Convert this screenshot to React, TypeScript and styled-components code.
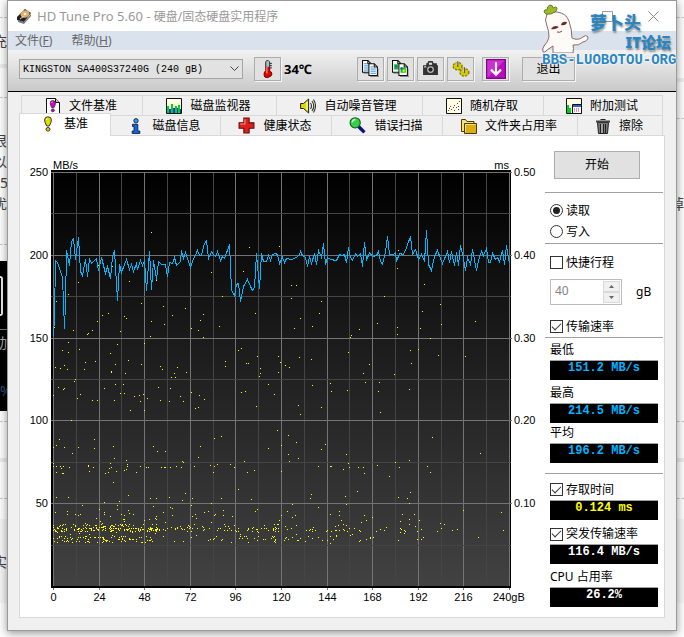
import React from "react";
import styled, { createGlobalStyle, css } from "styled-components";

const UI = '"Noto Sans", "Noto Sans CJK SC", sans-serif';
const MONO = '"Liberation Mono", "Noto Sans CJK SC", monospace';
const PLOT = '"Liberation Sans", Arial, sans-serif';

const GlobalStyle = createGlobalStyle`
  *, *::before, *::after { box-sizing: border-box; }
  body { margin: 0; background: #fcfcfc; font: 12px/16px ${UI}; color: #000; overflow: hidden; }
  button, input, select { font: inherit; color: inherit; margin: 0; padding: 0; border-radius: 0; }
`;

/* ---------- page behind the window ---------- */

const Desktop = styled.div`
  display: grid;
  grid-template-columns: 7px minmax(0, 1fr) 7px;
  padding-bottom: 7px;
`;

const Strip = styled.div`
  display: flex;
  flex-direction: column;
  min-width: 0;
  overflow: hidden;
`;

const StripGap = styled.div<{ $h: number; $bg?: string }>`
  flex: none;
  height: ${(p) => p.$h}px;
  background: ${(p) => p.$bg ?? "transparent"};
`;

const StripDash = styled.div`
  flex: none;
  border-top: 1px dashed #c4c4c4;
`;

const StripText = styled.div<{ $color?: string; $bg?: string; $start?: boolean }>`
  flex: none;
  display: flex;
  justify-content: ${(p) => (p.$start ? "flex-start" : "flex-end")};
  height: 21px;
  font-size: 14px;
  line-height: 21px;
  white-space: nowrap;
  color: ${(p) => p.$color ?? "#444"};
  background: ${(p) => p.$bg ?? "transparent"};
`;

const StripCard = styled.div`
  flex: none;
  width: 3px;
  height: 40px;
  border: solid #e8e8e8;
  border-width: 2px 2px 2px 0;
  border-radius: 0 3px 3px 0;
`;

const StripDark = styled.div`
  flex: none;
  height: 150px;
  padding-top: 15px;
  background: #000;
`;

/* ---------- window frame ---------- */

const Window = styled.main`
  position: relative;
  border: 1px solid #9a9a9a;
  background: #f0f0f0;
  box-shadow: 0 2px 8px rgba(0, 0, 0, 0.42);
`;

const TitleBar = styled.header`
  display: flex;
  align-items: center;
  height: 30px;
  padding-left: 8px;
  background: #fff;
  color: #999;
`;

const Title = styled.h1`
  flex: 1;
  margin: 0 0 0 5px;
  font-size: 12px;
  font-weight: 400;
`;

const ProductName = styled.span`
  font-size: 13px;
`;

const CaptionButton = styled.button`
  display: flex;
  align-items: center;
  justify-content: center;
  width: 46px;
  height: 30px;
  border: 0;
  background: none;
`;

const MenuBar = styled.nav`
  display: flex;
  gap: 19px;
  height: 19px;
  padding-left: 7px;
  background: #dae3ed;
`;

const MenuItem = styled.button`
  border: 0;
  background: none;
  color: #666;
  line-height: 18px;
`;

const Toolbar = styled.div`
  display: flex;
  align-items: center;
  height: 42px;
  padding: 0 11px 4px;
  border-bottom: 1px solid #000;
  background: linear-gradient(#f2f2f2, #c9c9c9);
`;

const DriveBox = styled.div`
  display: grid;
  flex: 0 1 224px;
  align-items: center;
  margin-right: 11px;
  & > * { grid-area: 1 / 1; }
  & > svg { justify-self: end; margin-right: 4px; pointer-events: none; }
`;

const DriveSelect = styled.select`
  appearance: none;
  width: 100%;
  height: 20px;
  padding: 2px 20px 0 3px;
  border: 1px solid #a5a5a5;
  background: #e2e2e2;
  font: 10px/16px ${MONO};
`;

const face = css`
  border: 1px solid #adadad;
  background: #e1e1e1;
`;

const ToolButton = styled.button<{ $wide?: boolean }>`
  ${face}
  display: flex;
  flex: none;
  align-items: center;
  justify-content: center;
  width: ${(p) => (p.$wide ? 53 : 27)}px;
  height: 24px;
  box-shadow: 1px 1px 0 #f6f6f6;
`;

const Temperature = styled.output`
  flex: 1;
  padding-left: 3px;
  font-size: 13px;
  font-weight: 700;
`;

const ToolGroup = styled.div<{ $after: number }>`
  display: flex;
  gap: 3px;
  margin-right: ${(p) => p.$after}px;
`;

/* ---------- tabs ---------- */

const Content = styled.div`
  padding: 3px 11px 12px;
`;

const TabRow = styled.div<{ $columns: string; $inset?: boolean }>`
  display: grid;
  grid-template-columns: ${(p) => p.$columns};
  height: 20px;
  margin: 0 2px 0 ${(p) => (p.$inset ? 2 : 0)}px;
`;

const Tab = styled.button<{ $active?: boolean }>`
  display: flex;
  align-items: center;
  justify-content: center;
  gap: 8px;
  min-width: 0;
  padding-right: 2px;
  border: solid #d9d9d9;
  border-width: 1px 1px 0 0;
  background: #f0f0f0;
  white-space: nowrap;
  &:first-child { border-left-width: 1px; }
  & > svg { flex: none; }
  ${(p) =>
    p.$active &&
    css`
      z-index: 1;
      margin: -2px 0 -1px;
      padding-bottom: 3px;
      background: #fff;
    `}
`;

const Panel = styled.section`
  display: grid;
  grid-template-columns: minmax(0, 1fr) 119px;
  border: 1px solid #d9d9d9;
  background: #fff;
`;

const Chart = styled.svg`
  display: block;
  width: 100%;
  height: auto;
  font-family: ${PLOT};
  font-size: 11px;
`;

/* ---------- side column ---------- */

const Side = styled.aside`
  display: flex;
  flex-direction: column;
  padding: 15px 1px 0 0;
`;

const StartButton = styled.button`
  ${face}
  height: 28px;
  margin: 0 23px 13px 9px;
`;

const Divider = styled.hr`
  width: 100%;
  margin: 0;
  border: 0;
  border-top: 1px solid #a0a0a0;
`;

const Group = styled.div<{ $top?: number; $bottom?: number }>`
  display: flex;
  flex-direction: column;
  padding: ${(p) => p.$top ?? 0}px 5px ${(p) => p.$bottom ?? 0}px;
`;

const Choice = styled.label`
  display: flex;
  align-items: center;
  gap: 3px;
  height: 21px;
  white-space: nowrap;
`;

const Mark = styled.input`
  appearance: none;
  display: grid;
  place-content: center;
  flex: none;
  width: 13px;
  height: 13px;
  border: 1px solid #333;
  background: #fff;
  &[type="radio"] { border-radius: 50%; }
  &[type="radio"]:checked::before {
    content: "";
    width: 7px;
    height: 7px;
    border-radius: 50%;
    background: #222;
  }
  &[type="checkbox"]:checked::before {
    content: "";
    width: 9px;
    height: 5px;
    margin-bottom: 3px;
    border: solid #333;
    border-width: 0 0 1px 1px;
    transform: rotate(-45deg);
  }
`;

const StrokeRow = styled.div`
  display: flex;
  align-items: center;
  gap: 14px;
  margin: 6px 0 11px;
`;

const Spinner = styled.div`
  display: flex;
  width: 72px;
  height: 26px;
  padding: 1px;
  border: 1px solid #bcbcbc;
`;

const SpinnerInput = styled.input`
  flex: 1;
  min-width: 0;
  padding: 0 0 2px 3px;
  border: 0;
  background: #fff;
  color: #838383;
`;

const SpinnerButtons = styled.div`
  display: grid;
  grid-template-rows: 1fr 1fr;
  width: 17px;
`;

const SpinnerButton = styled.button`
  display: flex;
  align-items: center;
  justify-content: center;
  border: 1px solid #dadada;
  background: #f0f0f0;
`;

const Caption = styled.div<{ $gap?: number }>`
  height: 20px;
  margin-top: ${(p) => p.$gap ?? 0}px;
  line-height: 20px;
`;

const Readout = styled.output<{ $color: string }>`
  height: 20px;
  border-top: 1px solid #a0a0a0;
  background: #000;
  color: ${(p) => p.$color};
  font: 700 12px/14px ${MONO};
  text-align: center;
`;

/* ---------- forum badge ---------- */

const Badge = styled.div`
  position: absolute;
  top: 2px;
  right: 0;
  display: grid;
  grid-template-columns: 48px 86px;
  color: #2b86c0;
  font-weight: 900;
  pointer-events: none;
  text-shadow: 1px 2px 2px rgba(0, 0, 0, 0.4);
`;

const BadgeWords = styled.div`
  display: flex;
  flex-direction: column;
  padding-top: 10px;
  font-size: 17px;
  line-height: 20px;
`;

const BadgeSub = styled.span`
  align-self: flex-end;
  padding-right: 5px;
  font-size: 15px;
  line-height: 18px;
`;

const BadgeUrl = styled.span`
  grid-column: 1 / -1;
  font: 700 14px/14px ${MONO};
  text-shadow: 0 0 2px #fff, 0 0 2px #fff;
  white-space: nowrap;
`;

/* ---------- chart data ---------- */

const COLS = Array.from({ length: 21 }, (_, i) => i);
const ROWS = Array.from({ length: 11 }, (_, i) => i);
const LEFT = 53;
const TOP = 172;
const colX = (i: number) => Math.round(LEFT + i * 22.8) + 0.5;
const rowY = (i: number) => Math.round(TOP + i * 41.4) + 0.5;

/* Traces are sampled at three steps per chart unit, in tiles with their own origin. */
type Tile = { x: number; y: number; data: string };

const parse = ({ x, y, data }: Tile) =>
  data.split(" ").map((pair) => {
    const [a, b] = pair.split(",").map(Number);
    return [x + a / 3, y + b / 3];
  });

const TRANSFER: Tile[] = [
  {
    x: 0,
    y: 160,
    data: "160,528 163,470 166,300 172,306 187,352 193,505 196,430 199,272 207,316 214,245 220,235 227,298 235,232 241,335 248,346 256,298 262,349 268,296 275,310 289,294 296,332 304,293 316,340 322,318 331,355 337,290 344,271 352,421 358,312 364,336 379,298 387,328 394,314 400,333 408,309 412,328 421,302 427,316 433,300 440,391 448,275 454,388 460,302 469,358 475,305 484,312 496,314 502,349 508,306 517,309 523,292 529,316 540,304 545,272 551,296 556,277 571,322 577,303 592,272 598,286 604,286 613,250 620,241 625,296 633,275 639,283 646,290 652,275 661,300 668,289 673,296 688,254 695,390 704,407 709,374 715,371 721,424 730,378 742,358 751,380 758,391 764,382 769,280 778,386 784,281 790,304 798,304 806,285",
  },
  {
    x: 270,
    y: 160,
    data: "0,302 6,284 15,280 22,284 28,310 37,292 43,307 50,295 65,297 86,289 92,274 98,287 106,292 112,319 118,290 125,311 133,280 139,313 145,272 154,293 160,250 167,313 172,293 180,298 200,302 208,283 216,287 223,284 229,307 235,262 241,292 247,302 256,280 262,289 271,280 277,319 283,248 289,301 298,277 307,290 319,287 325,275 331,304 337,314 346,275 352,229 358,284 371,283 375,276 380,305 388,281 400,284 410,262 421,229 427,284 436,269 445,299 454,284 463,305 469,211 475,314 484,331 492,290 502,272 517,310 532,275 539,307 545,275 553,317 559,278 565,316 571,256 578,281 586,331 593,292 600,312 606,268 619,331 628,290 634,274 641,286 649,266 656,307 661,307 667,281 676,298 683,293 689,305 697,272 703,313 709,256 717,310",
  },
];

const ACCESS: Tile[] = [
  {
    x: 0,
    y: 160,
    data: "454,217 748,262 838,259 634,337 730,334 295,316 337,319 388,364 235,367 469,361 205,403 169,424 424,430 667,409 490,439 556,445 767,460 307,466 325,460 517,466 610,463 374,469 379,475 293,484 454,484 601,481 493,493 658,499 163,502 574,505 595,511 220,511 277,511 361,514 262,523 265,520 451,529 610,532 205,547 433,550 352,553 187,571 205,577 238,568 331,580 715,571 724,565 772,589 835,589",
  },
  {
    x: 270,
    y: 160,
    data: "385,271 382,325 64,376 79,376 64,415 463,373 343,409 154,424 511,433 148,460 457,454 91,475 73,505 127,499 322,490 514,493 616,484 268,508 382,502 451,505 244,526 241,532 382,523 481,535 235,577 421,571 445,568 88,592 124,598 505,586 586,589",
  },
  {
    x: 0,
    y: 360,
    data: "256,7 286,4 385,1 166,22 181,25 193,16 202,28 253,28 346,13 376,40 334,35 334,37 424,13 481,19 487,28 532,22 523,40 526,52 514,52 559,37 676,4 676,19 739,10 745,10 781,25 781,40 778,49 835,37 226,58 223,64 346,73 370,73 175,82 193,85 190,88 313,85 475,82 511,85 160,106 241,103 361,100 373,100 430,103 418,106 403,109 232,115 442,115 277,121 292,121 343,121 421,124 481,121 508,124 541,109 550,124 574,97 598,106 613,118 595,142 586,145 724,97 736,94 805,73 823,103 769,139 433,151 391,151 214,181 832,211 664,229 643,235 178,238 283,238 169,256 160,262 193,262 235,262 283,265 340,259 217,280 343,295 460,259 472,274 496,274 601,259 595,292 805,265 160,310 169,319 160,319 181,319 190,319 184,325 208,322 265,316 265,320 280,322 268,334 331,310 328,325 334,322 379,301 382,313 382,319 379,328 373,331 349,334 325,337 316,340 421,319 439,322 445,322 409,337 484,322 493,322 496,322 511,322 529,319 544,322 547,304 550,307 583,319 631,316 652,313 643,319 640,337 691,313 703,322 733,304 742,337 763,331 169,337 187,340 190,340 340,367 715,388 385,406 556,400 169,412 205,412 451,415 469,415 508,412 577,415 547,421 634,430 664,415 754,418 313,427 358,424 247,436 352,436 352,448 298,448 460,439 511,442 517,445 574,436 772,448 766,454 166,457 202,454 202,463 313,457 313,463 385,451 388,460 400,463 490,457 586,463 613,457 625,454 670,451 226,463 235,466 241,463 289,475 331,469 364,463 373,467 373,478 469,469 466,475 517,466 577,469 589,475 646,463 643,466 670,466 697,469",
  },
  {
    x: 270,
    y: 360,
    data: "31,7 46,16 58,22 25,37 298,13 424,10 280,40 373,43 286,67 328,67 181,70 127,76 184,94 232,91 325,94 418,88 13,103 85,136 154,142 91,163 331,157 22,211 55,226 79,247 487,232 34,256 166,253 154,268 631,280 55,283 85,295 58,304 229,283 235,310 238,322 220,328 145,319 181,319 184,319 376,307 418,301 322,316 388,322 265,322 280,322 283,340 358,349 472,319 481,337 34,334 262,394 124,403 121,415 226,409 385,412 412,415 421,397 418,430 67,433 229,433 145,442 580,451 694,457 52,454 67,472 76,466 34,466 28,481 25,493 181,463 208,454 208,467 214,481 283,466 289,481 307,472 274,487 397,463 433,463 391,484 418,478 448,481 418,493 436,499 511,490 523,493 514,505 46,499 16,502 10,509 10,511 52,508 64,505 79,496 130,502 109,511 118,511 121,508 127,508 127,514 136,511 169,514 172,511 184,514 196,499 205,496 196,511 199,511 208,511 220,493 229,496 220,508 223,511 232,514 238,505 253,505 268,511 271,514 319,514 331,508 343,511 349,502 391,505 391,517 394,508 403,511 403,519 406,514 442,514 454,508 502,514 547,511 562,508 700,511 4,535 7,529 10,532 16,538 16,541 43,541 46,535 49,532 55,538 67,532 79,523 82,541 85,541 91,535 106,544 115,529 127,535 145,532 157,541 172,541 181,529 190,538 199,526 199,529 181,550 241,526 247,523 268,544 271,541 289,538 301,532 301,535 310,532 385,541 442,538 454,538 460,532 625,532",
  },
];

/* The first half of the drive answers in a tight band near 0.06 ms. */
const band = () => {
  let seed = 91;
  const next = () => {
    seed = (seed * 16807) % 2147483647;
    return seed / 2147483647;
  };
  return Array.from({ length: 370 }, () => {
    const spread = next() < 0.45 ? 105 : 226;
    const kind = next();
    const x = 53 + Math.floor(next() * spread);
    const r = next();
    if (kind < 0.4) return [x, 528 + Math.floor(r * 4)];
    if (kind < 0.6) return [x, 524 + Math.floor(r * 5)];
    if (kind < 0.9) return [x, 536 + Math.floor(r * 7)];
    return [x, 519 + Math.floor(r * 18)];
  });
};

const dots = [...ACCESS.flatMap(parse), ...band()]
  .map(([x, y]) => `M${Math.floor(x)} ${Math.floor(y)}h1v1h-1z`)
  .join("");

const trace = TRANSFER.flatMap(parse)
  .map(([x, y]) => `${Math.floor(x) + 0.5},${Math.floor(y) + 0.5}`)
  .join(" ");

const BenchmarkChart = () => (
  <Chart viewBox="20 136 525 481" role="img" aria-label="传输速率与存取时间">
    <defs>
      <linearGradient id="plot" x1="0" y1="0" x2="0" y2="1">
        <stop offset="0" stopColor="#000" />
        <stop offset="1" stopColor="#424242" />
      </linearGradient>
    </defs>
    <rect x="51" y="170" width="460" height="418" fill="#000" />
    <rect x="53" y="172" width="457" height="414" fill="url(#plot)" />
    <g shapeRendering="crispEdges">
      {COLS.map((i) => (
        <path key={i} d={`M${colX(i)} 172V${i % 2 ? 588 : 590}`} stroke={i % 2 ? "#454545" : "#747474"} />
      ))}
      {ROWS.slice(0, 10).map((i) => (
        <path key={i} d={`M51 ${rowY(i)}H${i % 2 ? 511 : 512}`} stroke={i % 2 ? "#454545" : "#747474"} />
      ))}
      <path d="M51 587H511" stroke="#000" strokeWidth="2" />
      <path d={dots} fill="#ff0" />
      <polyline points={trace} fill="none" stroke="#00b8ff" />
    </g>
    <text x="53" y="169">MB/s</text>
    <text x="509" y="169" textAnchor="end">ms</text>
    {[250, 200, 150, 100, 50].map((v, i) => (
      <text key={v} x="48" y={rowY(i * 2) + 3} textAnchor="end">{v}</text>
    ))}
    {["0.50", "0.40", "0.30", "0.20", "0.10"].map((v, i) => (
      <text key={v} x="514" y={rowY(i * 2) + 3}>{v}</text>
    ))}
    {Array.from({ length: 10 }, (_, i) => (
      <text key={i} x={colX(i * 2)} y="601" textAnchor="middle">{i * 24}</text>
    ))}
    <text x="493" y="601">240gB</text>
  </Chart>
);

/* ---------- icons ---------- */

const Icon = ({ children, size = 16 }: { children: React.ReactNode; size?: number }) => (
  <svg width={size} height={size} viewBox="0 0 16 16" aria-hidden="true">{children}</svg>
);

const DiskIcon = () => (
  <Icon>
    <path d="M1 9 9 1l6 4-7 9-7-2z" fill="#222" />
    <path d="M2 12 8 14 15 6v2l-7 8-6-2z" fill="#777" />
    <ellipse cx="9" cy="6" rx="4.600" ry="3.600" fill="#e3ab68" transform="rotate(-20 9 6)" />
    <circle cx="9" cy="6" r="1.300" fill="#fff" />
    <path d="m4 11 4-3" stroke="#ddd" />
  </Icon>
);

const ThermoIcon = () => (
  <Icon size={18}>
    <path d="M6 2q0-1.500 1.500-1.500T9.500 2v7.500q2 1 2 3T8 15.500 4.500 12.500q0-2 1.500-3z" fill="#e80000" stroke="#500" strokeWidth="0.800" />
    <path d="M6.500 1h2.500v5H6.500z" fill="#5fe0ea" />
    <path d="M7 6v6" stroke="#ff9a9a" />
    <path d="M9.500 3h2M9.500 5h2M9.500 7h2" stroke="#222" strokeWidth="0.800" />
  </Icon>
);

const PageShape = ({ x, y, children }: { x: number; y: number; children: React.ReactNode }) => (
  <g transform={`translate(${x} ${y})`}>
    <path d="M2 9V12.500H10V5" fill="none" stroke="#888" />
    <path d="M.5.5h5l3 3v8h-8z" fill="#fffdf0" stroke="#111" />
    <path d="M5.500.5v3h3" fill="none" stroke="#111" />
    {children}
  </g>
);

const TextLines = () => (
  <path d="M2 3.500h2.500M2 5.500h5M2 7.500h5M2 9.500h5" stroke="#2a8df0" strokeWidth="0.900" />
);

const CopyTextIcon = () => (
  <Icon size={17}>
    <PageShape x={0} y={0}><TextLines /></PageShape>
    <PageShape x={6} y={3}><TextLines /></PageShape>
  </Icon>
);

const CopyImageIcon = () => (
  <Icon size={17}>
    <PageShape x={0} y={0}><path d="M2 4h4v5H2z" fill="#19b52d" /><path d="M3 5h2v2H3z" fill="#2263d8" /></PageShape>
    <PageShape x={6} y={3}><path d="M2 4h5v5H2z" fill="#11c32c" /><path d="M2 4h2v2H2z" fill="#1552cf" /><path d="M4 6h2v2H4z" fill="#ff0" /></PageShape>
  </Icon>
);

const CameraIcon = () => (
  <Icon size={17}>
    <path d="M1 5h3V3h1l1-2h4l1 2h3v2h1v9H1z" fill="#333" />
    <path d="M6.500 2.500h3v2h-3z" fill="#ddd" />
    <circle cx="8" cy="9" r="3.200" fill="#bbb" />
    <circle cx="8" cy="9" r="2" fill="#222" />
    <path d="M2 6.500h2" stroke="#eee" />
  </Icon>
);

const GearsIcon = () => (
  <Icon size={18}>
    <ellipse cx="5" cy="5.500" rx="4" ry="3.300" fill="#d6cc00" stroke="#857d00" strokeDasharray="2 1" strokeWidth="1.200" />
    <ellipse cx="11" cy="11" rx="4" ry="3.300" fill="#d6cc00" stroke="#857d00" strokeDasharray="2 1" strokeWidth="1.200" />
    <path d="M5 1v5M11 6.500v5" stroke="#555" strokeWidth="1.300" />
    <path d="M4.300 1v4M10.300 7v4" stroke="#eee" strokeWidth="0.600" />
  </Icon>
);

const DownIcon = () => (
  <Icon size={20}>
    <rect x="0.500" y="0.500" width="15" height="15" fill="#b80cc0" stroke="#7c0784" />
    <path d="M1 1h14L1 15z" fill="#dc55e0" opacity="0.500" />
    <path d="M8 2.500V12M4 8.500l4 4 4-4" fill="none" stroke="#fff" strokeWidth="1.700" />
  </Icon>
);

const Bang = ({ fill }: { fill: string }) => (
  <g fill={fill} stroke="#222" strokeWidth="0.900">
    <path d="M8 .8q3.400 0 3.400 3.200Q11.400 6.500 9.300 10H6.700Q4.600 6.500 4.600 4 4.600.8 8 .8z" />
    <ellipse cx="8" cy="13.300" rx="2" ry="1.800" />
    <path d="M6.500 4q0-1.500 1-1.800" stroke="#fff" fill="none" />
  </g>
);

const FileBenchIcon = () => (
  <Icon>
    <path d="M1.500.5h9l4 4v11h-13z" fill="#fff" stroke="#111" />
    <path d="M10.500.5v4h4" fill="#ccc" stroke="#111" />
    <g transform="translate(1.600 2) scale(.78)"><Bang fill="#d400d4" /></g>
  </Icon>
);

const MonitorIcon = () => (
  <Icon>
    <path d="M.5.5h15v15H.5z" fill="#ffffe1" stroke="#111" />
    <path d="M1 8h2v7H1zM5 6h2v9H5zM9 8h2v7H9zM12 7h2v8h-2z" fill="#00d020" />
    <path d="M3 11h2v4H3zM7 10h2v5H7zM11 10h1v5h-1zM14 11h1v4h-1z" fill="#2433e0" />
  </Icon>
);

const SpeakerIcon = () => (
  <Icon>
    <path d="M.6 5.500h3l5-4.500v14l-5-4.500h-3z" fill="#e0da00" stroke="#222" />
    <path d="M7 4v8" stroke="#fff" />
    <path d="M10.500 5q2 3 0 6M12 3q3.500 5 0 10M13.500 1.500q4 6.500 0 13" fill="none" stroke="#333" strokeWidth="1.100" />
  </Icon>
);

const RandomIcon = () => (
  <Icon>
    <path d="M.5.5h15v15H.5z" fill="#ffffe1" stroke="#111" />
    <path d="M2 12h1v1H2zM5 11h1v1H5zM4 8h1v1H4zM8 7h1v1H8zM11 5h1v1h-1zM13 3h1v1h-1z" fill="#e02020" />
    <path d="M3 10h1v1H3zM7 9h1v1H7zM10 9h1v1h-1zM12 8h1v1h-1zM8 12h1v1H8zM12 11h1v1h-1z" fill="#2433e0" />
  </Icon>
);

const ExtraIcon = () => (
  <Icon>
    <path d="M.5.5h15v15H.5z" fill="#ffffe1" stroke="#111" />
    <path d="M1 7h2v8H1zM3 10h2v5H3z" fill="#00d020" />
    <path d="M6.500 6.500h9v9h-9z" fill="#fff" stroke="#111" />
    <path d="M7 7h8v2H7z" fill="#2a62d8" />
    <path d="M8 11h6M8 13h6" stroke="#e02060" strokeDasharray="1 1" />
  </Icon>
);

const InfoIcon = () => (
  <Icon>
    <circle cx="8" cy="2.800" r="2.200" fill="#2a9df4" stroke="#012" strokeWidth="0.800" />
    <path d="M4.500 6.300h5.300v6.700h2v2.400h-7.600V13H6V8.500H4.500z" fill="#1565e8" stroke="#012" strokeWidth="0.800" />
  </Icon>
);

const HealthIcon = () => (
  <Icon size={17}>
    <path d="M5.500 1h5v4.500H15v5h-4.500V15h-5v-4.500H1v-5h4.500z" fill="#dc2020" stroke="#6b0808" />
    <path d="M6.500 2v4.500H2" fill="none" stroke="#ff9090" />
  </Icon>
);

const ScanIcon = () => (
  <Icon size={17}>
    <path d="m9 9 5.500 5.500" stroke="#0a1480" strokeWidth="3.200" />
    <circle cx="5.800" cy="5.500" r="4.800" fill="#34d048" stroke="#0d5a18" />
    <path d="M3 5q.5-2.500 3-2.600" fill="none" stroke="#d5ffd9" strokeWidth="1.400" />
  </Icon>
);

const FolderIcon = () => (
  <Icon>
    <path d="M.5 13.500v-12h4l1.500 2h7v10z" fill="#f7e27a" stroke="#4b3b00" />
    <path d="M3.500 5.500h12v10h-12z" fill="#d9ae12" stroke="#4b3b00" />
    <path d="M4.500 14.500v-8h10" fill="none" stroke="#f7dd6a" />
  </Icon>
);

const TrashIcon = () => (
  <Icon>
    <path d="M2.500 4.500h11l-1 11h-9z" fill="#777" stroke="#222" />
    <path d="M1 2.500h14v2H1z" fill="#444" />
    <path d="M5.500 1.500h5" stroke="#222" />
    <path d="M5.500 6v9M8.500 6v9M10.500 6v9" stroke="#222" />
    <path d="M7 6v9" stroke="#ccc" />
  </Icon>
);

const Mascot = () => (
  <svg width="48" height="50" viewBox="0 0 48 50" aria-hidden="true">
    <path
      d="M5 11Q2 17 5 23 7 28 7 34 6 39 2 43 0 46 1 49 3 50 5 47L11 43 11 50H31Q32 45 31 42 37 43 41 39 46 38 46 34 44 31 41 34 36 38 30 35 30 27 27 18 24 10 15 9 9 8 5 11Z"
      fill="#fdfaf8"
      stroke="#8d6a66"
    />
    <path d="M2 9q0-3 3-2 0-4 3-5 3 0 3 3 3-2 4 0 0 3-2 4-4 3-9 2z" fill="#9db92f" stroke="#6d7f1a" />
    <path d="M9 26q3-5 8-2-4 3-8 2zM19 22q1-4 6-3-1 4-6 3z" fill="#6b2b24" />
    <path d="M15 29q3 1 5-1" fill="none" stroke="#a33" />
  </svg>
);

/* ---------- application ---------- */

const UPPER_TABS = [
  { label: "文件基准", icon: <FileBenchIcon /> },
  { label: "磁盘监视器", icon: <MonitorIcon /> },
  { label: "自动噪音管理", icon: <SpeakerIcon /> },
  { label: "随机存取", icon: <RandomIcon /> },
  { label: "附加测试", icon: <ExtraIcon /> },
];

const LOWER_TABS = [
  { label: "基准", icon: <Icon><Bang fill="#e0da00" /></Icon>, active: true },
  { label: "磁盘信息", icon: <InfoIcon /> },
  { label: "健康状态", icon: <HealthIcon /> },
  { label: "错误扫描", icon: <ScanIcon /> },
  { label: "文件夹占用率", icon: <FolderIcon /> },
  { label: "擦除", icon: <TrashIcon /> },
];

const BLUE = "#00b4ff";

export default function App() {
  return (
    <>
      <GlobalStyle />
      <Desktop>
        <Strip>
          <StripGap $h={17} />
          <StripDash />
          <StripGap $h={12} />
          <StripText>充</StripText>
          <StripGap $h={13} />
          <StripGap $h={4} $bg="#ececec" />
          <StripGap $h={29} />
          <StripDash />
          <StripGap $h={32} />
          <StripText>很</StripText>
          <StripText>以</StripText>
          <StripText $start>50</StripText>
          <StripText>优</StripText>
          <StripGap $h={30} />
          <StripDash />
          <StripGap $h={16} />
          <StripDark>
            <StripCard />
            <StripGap $h={13} />
            <StripGap $h={1} $bg="#777" />
            <StripGap $h={2} />
            <StripText $color="#aaa">动</StripText>
            <StripGap $h={27} />
            <StripText $color="#2d5578" $start>%</StripText>
          </StripDark>
          <StripGap $h={10} />
          <StripDash />
          <StripGap $h={36} />
          <StripGap $h={4} $bg="#e9e9e9" />
          <StripGap $h={36} />
          <StripDash />
          <StripGap $h={20} />
          <StripGap $h={32} $bg="#f3f3f3" />
          <StripText $bg="#f3f3f3">实</StripText>
          <StripGap $h={31} $bg="#f3f3f3" />
        </Strip>

        <Window>
          <TitleBar>
            <DiskIcon />
            <Title><ProductName>HD Tune Pro 5.60 - </ProductName>硬盘/固态硬盘实用程序</Title>
            <CaptionButton aria-label="最小化">
              <svg width="11" height="11" aria-hidden="true"><path d="M0 5.500h11" stroke="#999" /></svg>
            </CaptionButton>
            <CaptionButton aria-label="最大化">
              <svg width="11" height="11" aria-hidden="true"><path d="M.5.5h10v10H.5z" fill="none" stroke="#999" /></svg>
            </CaptionButton>
            <CaptionButton aria-label="关闭">
              <svg width="11" height="11" aria-hidden="true"><path d="m.5.5 10 10m0-10-10 10" stroke="#888" /></svg>
            </CaptionButton>
          </TitleBar>

          <MenuBar>
            <MenuItem>文件(<u>F</u>)</MenuItem>
            <MenuItem>帮助(<u>H</u>)</MenuItem>
          </MenuBar>

          <Toolbar>
            <DriveBox>
              <DriveSelect aria-label="硬盘" defaultValue="a">
                <option value="a">KINGSTON SA400S37240G (240 gB)</option>
              </DriveSelect>
              <svg width="9" height="6" aria-hidden="true"><path d="m.5.500 4 4 4-4" fill="none" stroke="#444" /></svg>
            </DriveBox>
            <ToolButton aria-label="温度"><ThermoIcon /></ToolButton>
            <Temperature>34℃</Temperature>
            <ToolGroup $after={8}>
              <ToolButton aria-label="复制文本"><CopyTextIcon /></ToolButton>
              <ToolButton aria-label="复制图像"><CopyImageIcon /></ToolButton>
              <ToolButton aria-label="截图"><CameraIcon /></ToolButton>
              <ToolButton aria-label="选项"><GearsIcon /></ToolButton>
            </ToolGroup>
            <ToolGroup $after={13}>
              <ToolButton aria-label="保存"><DownIcon /></ToolButton>
            </ToolGroup>
            <ToolGroup $after={90}>
              <ToolButton $wide>退出</ToolButton>
            </ToolGroup>
          </Toolbar>

          <Content>
            <TabRow role="tablist" $inset $columns="122fr 134fr 146fr 121fr 119fr">
              {UPPER_TABS.map((t) => (
                <Tab key={t.label} role="tab">{t.icon}{t.label}</Tab>
              ))}
            </TabRow>
            <TabRow role="tablist" $columns="92fr 110fr 111fr 111fr 135fr 85fr">
              {LOWER_TABS.map((t) => (
                <Tab key={t.label} role="tab" aria-selected={!!t.active} $active={t.active}>{t.icon}{t.label}</Tab>
              ))}
            </TabRow>

            <Panel>
              <BenchmarkChart />
              <Side>
                <StartButton>开始</StartButton>
                <Divider />
                <Group $top={7} $bottom={1}>
                  <Choice><Mark type="radio" name="mode" defaultChecked />读取</Choice>
                  <Choice><Mark type="radio" name="mode" />写入</Choice>
                </Group>
                <Divider />
                <Group $top={8}>
                  <Choice><Mark type="checkbox" />快捷行程</Choice>
                  <StrokeRow>
                    <Spinner>
                      <SpinnerInput defaultValue="40" aria-label="快捷行程容量" disabled />
                      <SpinnerButtons>
                        <SpinnerButton aria-label="增加">
                          <svg width="5" height="3" aria-hidden="true"><path d="M0 3 2.500 0 5 3z" fill="#666" /></svg>
                        </SpinnerButton>
                        <SpinnerButton aria-label="减少">
                          <svg width="5" height="3" aria-hidden="true"><path d="M0 0 2.500 3 5 0z" fill="#666" /></svg>
                        </SpinnerButton>
                      </SpinnerButtons>
                    </Spinner>
                    gB
                  </StrokeRow>
                  <Choice><Mark type="checkbox" defaultChecked />传输速率</Choice>
                </Group>
                <Divider />
                <Group $bottom={10}>
                  <Caption $gap={2}>最低</Caption>
                  <Readout $color={BLUE}>151.2 MB/s</Readout>
                  <Caption $gap={3}>最高</Caption>
                  <Readout $color={BLUE}>214.5 MB/s</Readout>
                  <Caption>平均</Caption>
                  <Readout $color={BLUE}>196.2 MB/s</Readout>
                </Group>
                <Divider />
                <Group $top={5}>
                  <Choice><Mark type="checkbox" defaultChecked />存取时间</Choice>
                  <Readout $color="#ff0">0.124 ms</Readout>
                  <Caption $gap={4} as={Choice}><Mark type="checkbox" defaultChecked />突发传输速率</Caption>
                  <Readout $color="#fff">116.4 MB/s</Readout>
                  <Caption $gap={3}>CPU 占用率</Caption>
                  <Readout $color="#fff">26.2%</Readout>
                </Group>
              </Side>
            </Panel>
          </Content>

          <Badge>
            <Mascot />
            <BadgeWords>
              萝卜头
              <BadgeSub>IT论坛</BadgeSub>
            </BadgeWords>
            <BadgeUrl>BBS-LUOBOTOU-ORG</BadgeUrl>
          </Badge>
        </Window>

        <Strip>
          <StripGap $h={17} />
          <StripDash />
          <StripGap $h={60} />
          <StripGap $h={4} $bg="#ececec" />
          <StripGap $h={36} />
          <StripDash />
          <StripGap $h={74} />
          <StripText>掉</StripText>
          <StripGap $h={207} />
          <StripDash />
          <StripGap $h={36} />
          <StripGap $h={4} $bg="#e9e9e9" />
          <StripGap $h={36} />
          <StripDash />
          <StripGap $h={20} />
          <StripGap $h={84} $bg="#f3f3f3" />
        </Strip>
      </Desktop>
    </>
  );
}
